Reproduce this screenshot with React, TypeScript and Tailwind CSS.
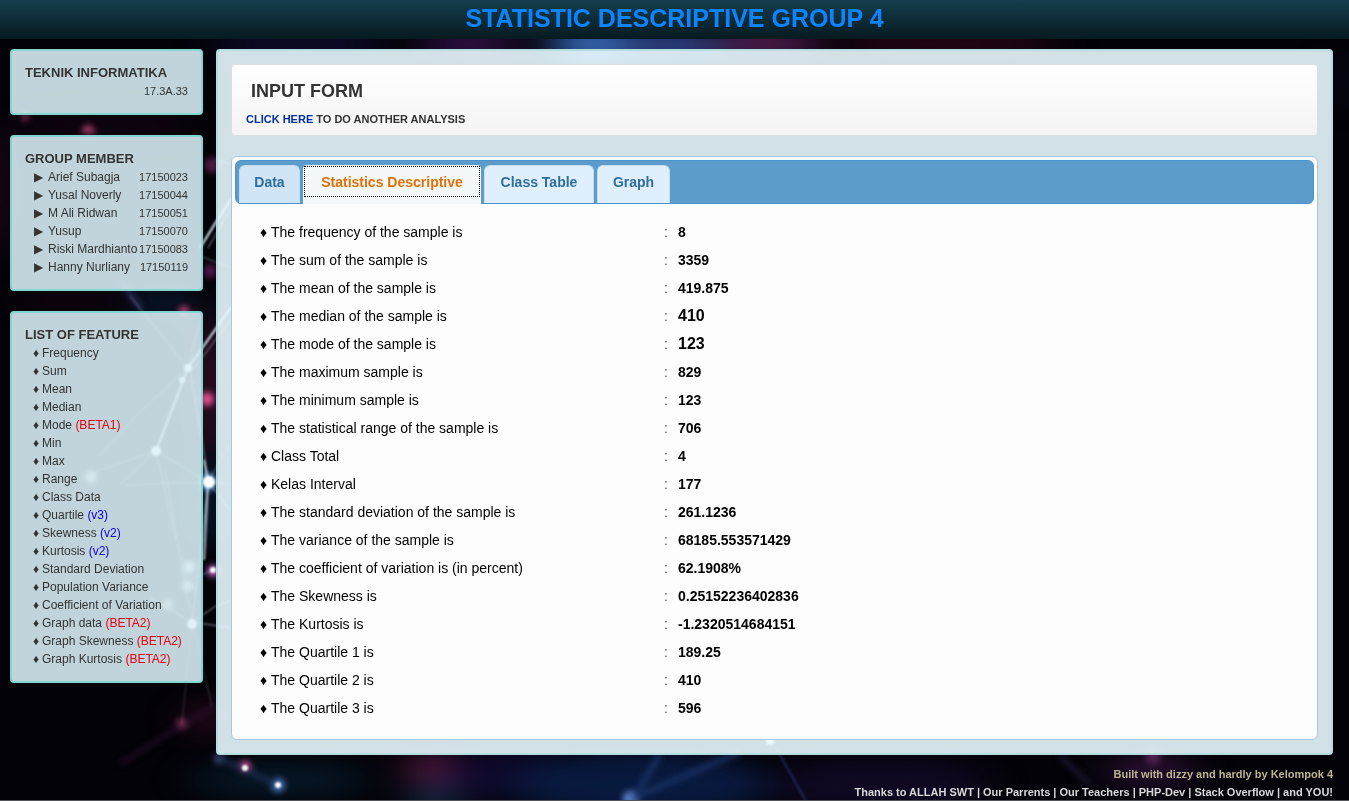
import { useState, type ReactNode } from "react";

const members = [
  ["Arief Subagja", "17150023"],
  ["Yusal Noverly", "17150044"],
  ["M Ali Ridwan", "17150051"],
  ["Yusup", "17150070"],
  ["Riski Mardhianto", "17150083"],
  ["Hanny Nurliany", "17150119"],
];

const features: { name: string; tag?: string; beta?: boolean }[] = [
  { name: "Frequency" },
  { name: "Sum" },
  { name: "Mean" },
  { name: "Median" },
  { name: "Mode", tag: "(BETA1)", beta: true },
  { name: "Min" },
  { name: "Max" },
  { name: "Range" },
  { name: "Class Data" },
  { name: "Quartile", tag: "(v3)" },
  { name: "Skewness", tag: "(v2)" },
  { name: "Kurtosis", tag: "(v2)" },
  { name: "Standard Deviation" },
  { name: "Population Variance" },
  { name: "Coefficient of Variation" },
  { name: "Graph data", tag: "(BETA2)", beta: true },
  { name: "Graph Skewness", tag: "(BETA2)", beta: true },
  { name: "Graph Kurtosis", tag: "(BETA2)", beta: true },
];

const stats: { label: string; value: string; strong?: boolean }[] = [
  { label: "The frequency of the sample is", value: "8" },
  { label: "The sum of the sample is", value: "3359" },
  { label: "The mean of the sample is", value: "419.875" },
  { label: "The median of the sample is", value: "410", strong: true },
  { label: "The mode of the sample is", value: "123", strong: true },
  { label: "The maximum sample is", value: "829" },
  { label: "The minimum sample is", value: "123" },
  { label: "The statistical range of the sample is", value: "706" },
  { label: "Class Total", value: "4" },
  { label: "Kelas Interval", value: "177" },
  { label: "The standard deviation of the sample is", value: "261.1236" },
  { label: "The variance of the sample is", value: "68185.553571429" },
  { label: "The coefficient of variation is (in percent)", value: "62.1908%" },
  { label: "The Skewness is", value: "0.25152236402836" },
  { label: "The Kurtosis is", value: "-1.2320514684151" },
  { label: "The Quartile 1 is", value: "189.25" },
  { label: "The Quartile 2 is", value: "410" },
  { label: "The Quartile 3 is", value: "596" },
];

const tabs = [
  { name: "Data", look: "w-[61px] bg-[#d0e5f5]" },
  { name: "Statistics Descriptive", look: "w-[178px] bg-[#dfeffc]" },
  { name: "Class Table", look: "w-[110px] bg-[#dfeffc]" },
  { name: "Graph", look: "w-[73px] bg-[#dfeffc]" },
];

function Backdrop() {
  return (
    <svg
      className="absolute inset-0 -z-10 h-full w-full"
      viewBox="0 0 1349 801"
      preserveAspectRatio="xMidYMid slice"
      aria-hidden="true"
    >
      <defs>
        <filter
          id="haze"
          filterUnits="userSpaceOnUse"
          x="-60"
          y="-60"
          width="1469"
          height="921"
          colorInterpolationFilters="sRGB"
        >
          <feGaussianBlur stdDeviation="20 12" />
        </filter>
        <filter id="glow" x="-100%" y="-100%" width="300%" height="300%" colorInterpolationFilters="sRGB">
          <feGaussianBlur stdDeviation="3" />
        </filter>
        <filter id="soft" x="-100%" y="-100%" width="300%" height="300%" colorInterpolationFilters="sRGB">
          <feGaussianBlur stdDeviation="0.8" />
        </filter>
      </defs>
      <rect width="1349" height="801" fill="#030208" />
      <g filter="url(#haze)" opacity=".8">
        <ellipse cx="300" cy="44" rx="90" ry="14" fill="#10103a" />
        <ellipse cx="470" cy="44" rx="50" ry="18" fill="#3a1450" />
        <ellipse cx="950" cy="44" rx="110" ry="18" fill="#2c0618" />
        <ellipse cx="760" cy="44" rx="60" ry="20" fill="#5a2058" />
        <ellipse cx="670" cy="46" rx="55" ry="22" fill="#344a96" />
        <ellipse cx="592" cy="44" rx="40" ry="28" fill="#3f78d0" />
        <ellipse cx="110" cy="126" rx="90" ry="10" fill="#1a0518" />
        <ellipse cx="70" cy="300" rx="60" ry="10" fill="#180412" />
        <ellipse cx="165" cy="302" rx="36" ry="16" fill="#0c1c34" />
        <ellipse cx="212" cy="390" rx="14" ry="80" fill="#581840" />
        <ellipse cx="210" cy="500" rx="14" ry="50" fill="#0c2c48" />
        <ellipse cx="0" cy="190" rx="12" ry="70" fill="#30082a" />
        <ellipse cx="208" cy="718" rx="22" ry="16" fill="#3c0c28" />
        <ellipse cx="280" cy="780" rx="90" ry="18" fill="#081c2e" />
        <ellipse cx="500" cy="775" rx="90" ry="24" fill="#120a34" />
        <ellipse cx="430" cy="768" rx="22" ry="18" fill="#6a2050" />
        <ellipse cx="434" cy="798" rx="26" ry="10" fill="#20456a" />
        <ellipse cx="640" cy="785" rx="130" ry="34" fill="#0a1f4c" />
        <ellipse cx="880" cy="785" rx="110" ry="28" fill="#120a28" />
        <ellipse cx="1150" cy="770" rx="46" ry="16" fill="#34153e" />
        <ellipse cx="1342" cy="80" rx="8" ry="30" fill="#0c1028" />
      </g>
      <g filter="url(#glow)" fill="none">
        <path d="M80 133 88 124 97 133Z" fill="#c04478" />
        <circle cx="25" cy="117" r="4" fill="#7c2850" />
        <circle cx="184" cy="311" r="5" fill="#c84080" />
        <circle cx="212" cy="165" r="8" fill="#4e1a40" />
        <circle cx="210" cy="271" r="7" fill="#501848" />
        <circle cx="207" cy="399" r="7" fill="#e05090" />
        <circle cx="182" cy="724" r="5" fill="#b0406c" />
        <circle cx="219" cy="759" r="5" fill="#404a7c" />
        <circle cx="245" cy="767" r="6" fill="#d85098" />
        <circle cx="278" cy="785" r="7" fill="#4878c0" />
        <circle cx="631" cy="799" r="8" fill="#6088d0" />
        <circle cx="1153" cy="757" r="8" fill="#4e204c" />
        <path d="M1060 756 1090 785" stroke="#201c38" strokeWidth="4" />
        <path d="M120 764 180 726 215 706" stroke="#2c1230" strokeWidth="3" />
        <path d="M631 799 740 752M638 790 660 755" stroke="#1c3468" strokeWidth="5" />
        <path d="M219 758 278 785" stroke="#203458" strokeWidth="4" />
        <path d="M120 280 142 310" stroke="#303468" strokeWidth="4" />
        <circle cx="91" cy="477" r="5" fill="#fff" />
        <circle cx="189" cy="567" r="6" fill="#dceaff" />
        <circle cx="188" cy="586" r="5" fill="#dceaff" />
        <circle cx="168" cy="604" r="4" fill="#fff" />
        <circle cx="213" cy="571" r="6" fill="#c060c0" />
        <circle cx="208" cy="482" r="8" fill="#80b8ff" />
      </g>
      <g filter="url(#soft)" stroke="#e4f0ff" fill="none">
        <path d="M188 368 232 306" strokeWidth="2" />
        <path d="M200 248 216 222 232 198" strokeWidth="2" />
        <path d="M208 248 232 206M194 368 232 318M190 368 205 460 208 482 232 512" opacity=".6" />
        <path d="M188 368 156 451" strokeWidth="2" opacity=".9" />
        <path d="M188 368 140 412 100 455M188 368 130 296M188 368 200 320" opacity=".4" />
        <path d="M156 451 208 482 125 485M156 451 95 472M156 451 120 485M156 451 176 540M165 470 192 622M208 482 232 440" opacity=".4" />
        <path d="M208 482 202 540 192 622 150 598M192 622 216 606 232 600M192 622 232 628" opacity=".6" />
        <path d="M192 622 182 724M192 622 212 706" opacity=".2" />
        <path d="M204 460 208 482 204 560" strokeWidth="2" opacity=".8" />
        <path d="M208 482 232 484M216 160 232 164M200 256 232 268M190 580 213 570" opacity=".4" />
        <g fill="#fff" stroke="none">
          <circle cx="188" cy="368" r="4" />
          <circle cx="182" cy="380" r="3" />
          <circle cx="156" cy="451" r="5" />
          <circle cx="209" cy="482" r="6" />
          <circle cx="192" cy="624" r="5" />
          <circle cx="213" cy="570" r="3" />
          <circle cx="245" cy="768" r="3" />
          <circle cx="278" cy="785" r="3" />
          <circle cx="770" cy="741" r="4" />
        </g>
        <path d="M776 748 806 801" strokeWidth="2" stroke="#303e78" opacity=".6" />
      </g>
      <rect y="800" width="1349" height="1" fill="#55555c" />
    </svg>
  );
}

function Card({ title, children }: { title: string; children: ReactNode }) {
  return (
    <section className="rounded border-2 border-[#83d6cf] bg-[rgba(220,241,248,0.88)] p-[13px] text-xs leading-[18px] text-[#333]">
      <h2 className="text-[13px] leading-[18px] font-bold">{title}</h2>
      {children}
    </section>
  );
}

export default function App() {
  const [active, setActive] = useState("Statistics Descriptive");

  return (
    <div className="relative isolate min-h-screen bg-black font-['Liberation_Sans',Arial,sans-serif]">
      <Backdrop />
      <header className="h-[39px] bg-linear-to-b from-[#153e4e] to-[#071a20]">
        <h1 className="text-center text-[25px] leading-9 font-bold text-[#0a84ff]">
          STATISTIC DESCRIPTIVE GROUP 4
        </h1>
      </header>

      <div className="flex items-start gap-[13px] pt-[10px] pr-4 pl-[10px]">
        <aside className="flex w-[193px] shrink-0 flex-col gap-5">
          <Card title="TEKNIK INFORMATIKA">
            <p className="text-right text-[11px] leading-[18px]">17.3A.33</p>
          </Card>
          <Card title="GROUP MEMBER">
            <ul>
              {members.map(([name, id]) => (
                <li key={id} className="flex pl-[9px] whitespace-nowrap">
                  <span className="w-[14px]">▶</span>
                  <span>{name}</span>
                  <span className="ml-auto text-[11px]">{id}</span>
                </li>
              ))}
            </ul>
          </Card>
          <Card title="LIST OF FEATURE">
            <ul>
              {features.map((f) => (
                <li key={f.name} className="flex pl-2 whitespace-nowrap">
                  <span className="w-[9px]">♦</span>
                  <span>
                    {f.name}{" "}
                    {f.tag && (
                      <span className={f.beta ? "text-[#e8000b]" : "text-[#1000d8]"}>{f.tag}</span>
                    )}
                  </span>
                </li>
              ))}
            </ul>
          </Card>
        </aside>

        <main className="min-w-0 grow rounded border-2 border-[#b4dde0] bg-[rgba(233,250,255,0.9)] p-[13px]">
          <section className="rounded border border-[#dcdfe0] bg-linear-to-b from-white to-[#f4f4f4] px-[14px] pt-4 pb-[7px] text-[#333]">
            <h2 className="pl-[5px] text-lg leading-5 font-bold">INPUT FORM</h2>
            <p className="pt-[9px] text-[11px] leading-[18px] font-bold">
              <a href="#" className="text-[#00309c]">
                CLICK HERE
              </a>{" "}
              TO DO ANOTHER ANALYSIS
            </p>
          </section>

          <section className="mt-5 rounded-md border border-[#a6c9e2] bg-[#fdfdfd] p-[3px]">
            <div
              role="tablist"
              className="flex h-11 items-end gap-[3px] rounded-md border border-[#4b93cd] bg-[#5c9ccc] pl-[3px]"
            >
              {tabs.map((tab) =>
                tab.name === active ? (
                  <button
                    key={tab.name}
                    role="tab"
                    aria-selected="true"
                    className={`${tab.look} -mb-px h-[39px] rounded-t bg-[#f5f8f9]! px-px pt-px pb-[7px] text-sm font-bold text-[#e17009]`}
                  >
                    <span className="flex h-full items-center justify-center border border-dotted border-black">
                      {tab.name}
                    </span>
                  </button>
                ) : (
                  <button
                    key={tab.name}
                    role="tab"
                    aria-selected="false"
                    onClick={() => setActive(tab.name)}
                    className={`${tab.look} h-[38px] rounded-t-md border border-b-0 border-[#c5dbec] pb-[6px] text-sm font-bold text-[#2e6e9e]`}
                  >
                    {tab.name}
                  </button>
                ),
              )}
            </div>

            <div className="px-[25px] pt-[14px] pb-[14px]">
              <table className="w-full text-sm text-black">
                <tbody>
                  {stats.map((row) => (
                    <tr key={row.label} className="h-7">
                      <th scope="row" className="w-[404px] p-0 text-left font-normal">
                        <span className="flex">
                          <span className="w-[11px]">♦</span>
                          {row.label}
                        </span>
                      </th>
                      <td className="w-[14px] p-0 text-[#555]">:</td>
                      <td className={`p-0 font-bold ${row.strong ? "text-base leading-5" : ""}`}>
                        {row.value}
                      </td>
                    </tr>
                  ))}
                </tbody>
              </table>
            </div>
          </section>
        </main>
      </div>

      <footer className="pt-[10px] pr-4 text-right text-[11px] leading-[18px] font-bold">
        <p className="text-[#bdb590]">Built with dizzy and hardly by Kelompok 4</p>
        <p className="text-[#d8d8d8]">
          Thanks to ALLAH SWT | Our Parrents | Our Teachers | PHP-Dev | Stack Overflow | and YOU!
        </p>
      </footer>
    </div>
  );
}
